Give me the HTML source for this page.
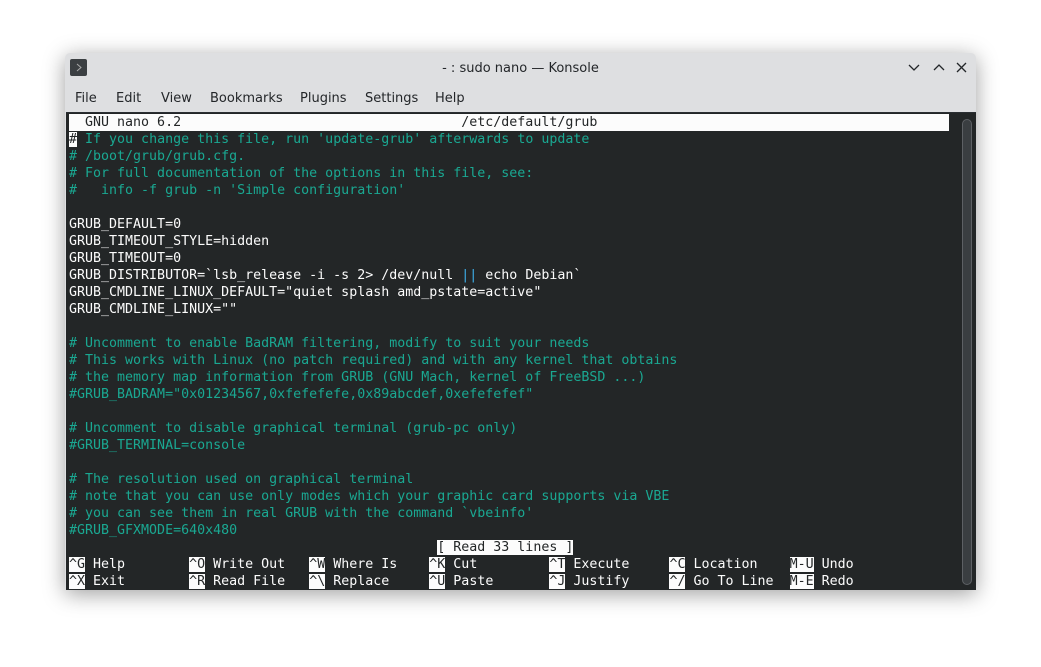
<!DOCTYPE html>
<html><head><meta charset="utf-8"><style>
html,body{margin:0;padding:0;width:1041px;height:667px;background:#fff;overflow:hidden}
.win{position:absolute;left:65px;top:53px;width:911px;height:537px;background:#dedfe1;border-radius:5px 5px 0 0;box-shadow:0 4px 22px rgba(0,0,0,0.38);overflow:hidden;font-family:"DejaVu Sans","Liberation Sans",sans-serif}
.icon{position:absolute;left:5px;top:6px;width:17px;height:17px;background:#3b3f42;border-radius:2px}
.title{position:absolute;left:0;right:0;top:8px;text-align:center;font-size:13px;color:#232629}
.menu{position:absolute;top:38px;font-size:13px;color:#232629}
.term{position:absolute;left:1px;top:59px;width:910px;height:478px;background:#232627;border-top:1px solid #2a2e32}
.l{position:absolute;left:3px;height:17px;line-height:17px;font-family:"DejaVu Sans Mono","Liberation Mono",monospace;font-size:13.3px;white-space:pre;color:#fcfcfc}
.c{color:#1aa892}
.inv{background:#fcfcfc;color:#232627}
.sb{position:absolute;left:896px;top:6px;width:8px;height:464px;border:1px solid #5d6064;border-radius:5px;background:#3a3e41}
</style></head><body>
<div class="win">
<div class="icon"><svg width="17" height="17"><path d="M7 5l4 3.5-4 3.5" stroke="#aaa" fill="none" stroke-width="1"/></svg></div>
<div class="title">- : sudo nano — Konsole</div>
<svg style="position:absolute;left:840px;top:7px" width="70" height="16"><path d="M4 5l5 5 5-5M29 10l5-5 5 5M52 3l9 9M61 3l-9 9" stroke="#232629" fill="none" stroke-width="1.3"/></svg>
<span class="menu" style="left:10px">File</span>
<span class="menu" style="left:51px">Edit</span>
<span class="menu" style="left:96px">View</span>
<span class="menu" style="left:145px">Bookmarks</span>
<span class="menu" style="left:235px">Plugins</span>
<span class="menu" style="left:300px">Settings</span>
<span class="menu" style="left:370px">Help</span>
<div class="term">
<div class="l inv" style="top:1px;width:880px">  GNU nano 6.2                                   /etc/default/grub</div>
<div class="l c" style="top:18px"><span class="inv">#</span> If you change this file, run 'update-grub' afterwards to update</div>
<div class="l c" style="top:35px"># /boot/grub/grub.cfg.</div>
<div class="l c" style="top:52px"># For full documentation of the options in this file, see:</div>
<div class="l c" style="top:69px">#   info -f grub -n 'Simple configuration'</div>
<div class="l" style="top:103px">GRUB_DEFAULT=0</div>
<div class="l" style="top:120px">GRUB_TIMEOUT_STYLE=hidden</div>
<div class="l" style="top:137px">GRUB_TIMEOUT=0</div>
<div class="l" style="top:154px">GRUB_DISTRIBUTOR=`lsb_release -i -s 2&gt; /dev/null <span style="color:#3daee9">||</span> echo Debian`</div>
<div class="l" style="top:171px">GRUB_CMDLINE_LINUX_DEFAULT="quiet splash amd_pstate=active"</div>
<div class="l" style="top:188px">GRUB_CMDLINE_LINUX=""</div>
<div class="l c" style="top:222px"># Uncomment to enable BadRAM filtering, modify to suit your needs</div>
<div class="l c" style="top:239px"># This works with Linux (no patch required) and with any kernel that obtains</div>
<div class="l c" style="top:256px"># the memory map information from GRUB (GNU Mach, kernel of FreeBSD ...)</div>
<div class="l c" style="top:273px">#GRUB_BADRAM="0x01234567,0xfefefefe,0x89abcdef,0xefefefef"</div>
<div class="l c" style="top:307px"># Uncomment to disable graphical terminal (grub-pc only)</div>
<div class="l c" style="top:324px">#GRUB_TERMINAL=console</div>
<div class="l c" style="top:358px"># The resolution used on graphical terminal</div>
<div class="l c" style="top:375px"># note that you can use only modes which your graphic card supports via VBE</div>
<div class="l c" style="top:392px"># you can see them in real GRUB with the command `vbeinfo'</div>
<div class="l c" style="top:409px">#GRUB_GFXMODE=640x480</div>
<div class="l" style="top:426px">                                              <span class="inv">[ Read 33 lines ]</span></div>
<div class="l" style="top:443px"><span class="inv">^G</span> Help        <span class="inv">^O</span> Write Out   <span class="inv">^W</span> Where Is    <span class="inv">^K</span> Cut         <span class="inv">^T</span> Execute     <span class="inv">^C</span> Location    <span class="inv">M-U</span> Undo</div>
<div class="l" style="top:460px"><span class="inv">^X</span> Exit        <span class="inv">^R</span> Read File   <span class="inv">^\</span> Replace     <span class="inv">^U</span> Paste       <span class="inv">^J</span> Justify     <span class="inv">^/</span> Go To Line  <span class="inv">M-E</span> Redo</div>
<div class="sb"></div>
</div>
</div>
</body></html>
